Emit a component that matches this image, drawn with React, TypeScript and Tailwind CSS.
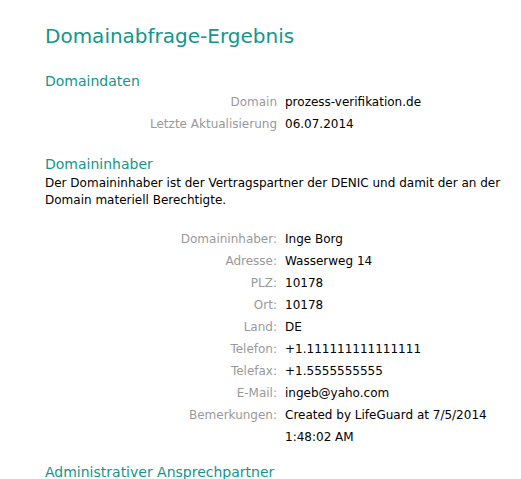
const domainData = [
  { label: "Domain", value: "prozess-verifikation.de" },
  { label: "Letzte Aktualisierung", value: "06.07.2014" },
];

const owner = [
  { label: "Domaininhaber:", value: "Inge Borg" },
  { label: "Adresse:", value: "Wasserweg 14" },
  { label: "PLZ:", value: "10178" },
  { label: "Ort:", value: "10178" },
  { label: "Land:", value: "DE" },
  { label: "Telefon:", value: "+1.111111111111111" },
  { label: "Telefax:", value: "+1.5555555555" },
  { label: "E-Mail:", value: "ingeb@yaho.com" },
  { label: "Bemerkungen:", value: "Created by LifeGuard at 7/5/2014 1:48:02 AM" },
];

function InfoTable({ rows }: { rows: { label: string; value: string }[] }) {
  return (
    <div className="grid grid-cols-[232px_216px] gap-x-[8px] text-[12px] leading-[22px]">
      {rows.map((row) => (
        <div key={row.label} className="contents">
          <div className="text-right text-[#999999]">{row.label}</div>
          <div className="text-black">{row.value}</div>
        </div>
      ))}
    </div>
  );
}

export default function App() {
  return (
    <div className="min-h-[479px] bg-white pl-[45px] pr-[20px] pt-[23px] font-['DejaVu_Sans',Verdana,sans-serif]">
      <h1 className="text-[20px] leading-[26px] text-[#12968a]">Domainabfrage-Ergebnis</h1>

      <h2 className="mt-[22px] text-[14px] leading-[20px] text-[#12968a]">Domaindaten</h2>
      <div className="mt-0">
        <InfoTable rows={domainData} />
      </div>

      <h2 className="mt-[19px] text-[14px] leading-[20px] text-[#12968a]">Domaininhaber</h2>
      <p className="mt-[1px] text-[12px] leading-[17px] text-black">
        Der Domaininhaber ist der Vertragspartner der DENIC und damit der an der Domain materiell Berechtigte.
      </p>
      <div className="mt-[19px]">
        <InfoTable rows={owner} />
      </div>

      <h2 className="mt-[14px] text-[14px] leading-[20px] text-[#12968a]">Administrativer Ansprechpartner</h2>
    </div>
  );
}
